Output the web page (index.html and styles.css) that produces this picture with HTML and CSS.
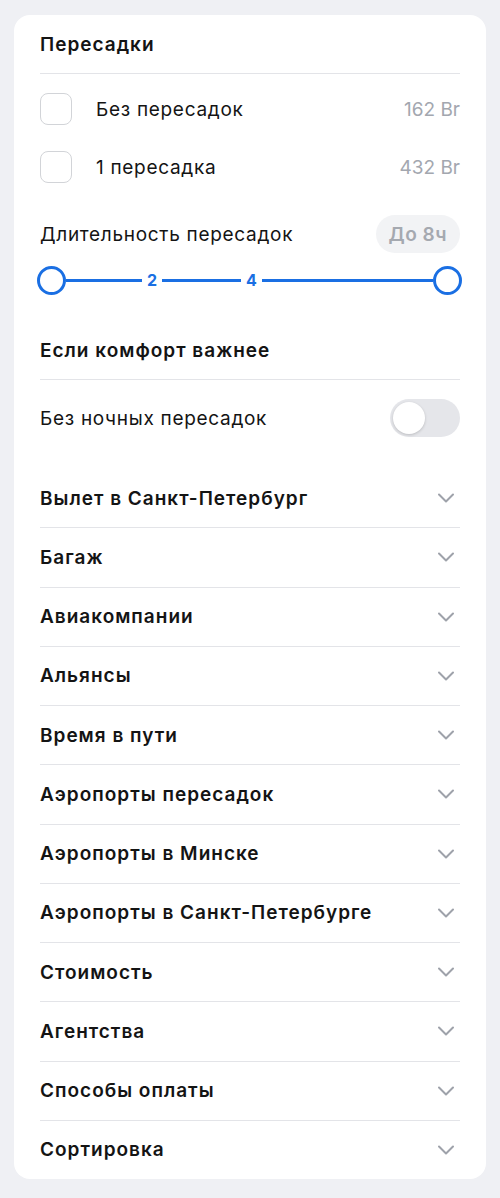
FILE: index.html
```html
<!DOCTYPE html>
<html lang="ru">
<head>
<meta charset="utf-8">
<link rel="stylesheet" href="styles.css">
</head>
<body>
<div class="card">
  <div class="section-title">Пересадки</div>
  <div class="divider"></div>
  <div class="check-row first">
    <span class="box"></span>
    <span class="check-label">Без пересадок</span>
    <span class="price">162 Br</span>
  </div>
  <div class="check-row">
    <span class="box"></span>
    <span class="check-label">1 пересадка</span>
    <span class="price">432 Br</span>
  </div>
  <div class="duration-row">
    <span class="duration-label">Длительность пересадок</span>
    <span class="pill">До 8ч</span>
  </div>
  <div class="slider">
    <span class="knob left"></span>
    <span class="track t1"></span>
    <span class="tick">2</span>
    <span class="track t2"></span>
    <span class="tick">4</span>
    <span class="track t3"></span>
    <span class="knob right"></span>
  </div>
  <div class="section-title comfort">Если комфорт важнее</div>
  <div class="divider"></div>
  <div class="toggle-row">
    <span class="toggle-label">Без ночных пересадок</span>
    <span class="toggle"><span class="toggle-knob"></span></span>
  </div>
  <div class="acc-list">
    <div class="acc-row"><span>Вылет в Санкт-Петербург</span><svg class="chev" viewBox="0 0 16 10" width="16" height="10"><polyline points="1,1.5 8,8.5 15,1.5"/></svg></div>
    <div class="acc-row"><span>Багаж</span><svg class="chev" viewBox="0 0 16 10" width="16" height="10"><polyline points="1,1.5 8,8.5 15,1.5"/></svg></div>
    <div class="acc-row"><span>Авиакомпании</span><svg class="chev" viewBox="0 0 16 10" width="16" height="10"><polyline points="1,1.5 8,8.5 15,1.5"/></svg></div>
    <div class="acc-row"><span>Альянсы</span><svg class="chev" viewBox="0 0 16 10" width="16" height="10"><polyline points="1,1.5 8,8.5 15,1.5"/></svg></div>
    <div class="acc-row"><span>Время в пути</span><svg class="chev" viewBox="0 0 16 10" width="16" height="10"><polyline points="1,1.5 8,8.5 15,1.5"/></svg></div>
    <div class="acc-row"><span>Аэропорты пересадок</span><svg class="chev" viewBox="0 0 16 10" width="16" height="10"><polyline points="1,1.5 8,8.5 15,1.5"/></svg></div>
    <div class="acc-row"><span>Аэропорты в Минске</span><svg class="chev" viewBox="0 0 16 10" width="16" height="10"><polyline points="1,1.5 8,8.5 15,1.5"/></svg></div>
    <div class="acc-row"><span>Аэропорты в Санкт-Петербурге</span><svg class="chev" viewBox="0 0 16 10" width="16" height="10"><polyline points="1,1.5 8,8.5 15,1.5"/></svg></div>
    <div class="acc-row"><span>Стоимость</span><svg class="chev" viewBox="0 0 16 10" width="16" height="10"><polyline points="1,1.5 8,8.5 15,1.5"/></svg></div>
    <div class="acc-row"><span>Агентства</span><svg class="chev" viewBox="0 0 16 10" width="16" height="10"><polyline points="1,1.5 8,8.5 15,1.5"/></svg></div>
    <div class="acc-row"><span>Способы оплаты</span><svg class="chev" viewBox="0 0 16 10" width="16" height="10"><polyline points="1,1.5 8,8.5 15,1.5"/></svg></div>
    <div class="acc-row"><span>Сортировка</span><svg class="chev" viewBox="0 0 16 10" width="16" height="10"><polyline points="1,1.5 8,8.5 15,1.5"/></svg></div>
  </div>
</div>
</body>
</html>
```

FILE: styles.css
```css
html, body {
  margin: 0;
  padding: 0;
  background: #eff0f4;
}
body {
  font-family: Inter, "Noto Sans", sans-serif;
  color: #141414;
  padding: 15px 14px 19px 14px;
}
.card {
  background: #ffffff;
  border-radius: 16px;
  padding: 18px 26px 0 26px;
}
.section-title {
  font-size: 19px;
  font-weight: 600;
  line-height: 24px;
  margin-bottom: 16px;
  letter-spacing: 1px;
}
.section-title.comfort {
  margin-top: 44px;
}
.divider {
  height: 1px;
  background: #e3e4e8;
}
.check-row {
  display: flex;
  align-items: center;
  height: 58px;
}
.check-row.first {
  margin-top: 6px;
}
.box {
  width: 30px;
  height: 30px;
  border: 1px solid #d2d4d8;
  border-radius: 8px;
  flex: none;
}
.check-label {
  font-size: 19px;
  margin-left: 24px;
  flex: 1;
  letter-spacing: 0.7px;
}
.price {
  font-size: 19px;
  color: #a3a7af;
  letter-spacing: 0;
}
.duration-row {
  margin-top: 19px;
  height: 38px;
  display: flex;
  align-items: center;
  justify-content: space-between;
}
.duration-label {
  font-size: 19px;
  letter-spacing: 0.7px;
}
.pill {
  background: #f2f3f5;
  border-radius: 19px;
  height: 38px;
  padding: 0 13px;
  display: flex;
  align-items: center;
  font-size: 19px;
  font-weight: 600;
  color: #a5a9b0;
  letter-spacing: 0.5px;
}
.slider {
  margin-top: 12px;
  height: 30px;
  display: flex;
  align-items: center;
}
.knob {
  width: 23px;
  height: 23px;
  border: 3px solid #1a6fe3;
  border-radius: 50%;
  background: #fff;
  flex: none;
}
.knob.left { margin-left: -3px; }
.knob.right { margin-right: -2px; }
.track {
  height: 3px;
  background: #1a6fe3;
}
.t1 { width: 76px; }
.t2 { width: 79px; }
.t3 { flex: 1; }
.tick {
  font-size: 16px;
  font-weight: 700;
  color: #1a6fe3;
  padding: 0 5px;
  line-height: 18px;
}
.toggle-row {
  margin-top: 19px;
  height: 38px;
  display: flex;
  align-items: center;
  justify-content: space-between;
}
.toggle-label {
  font-size: 19px;
  letter-spacing: 0.7px;
}
.toggle {
  width: 70px;
  height: 38px;
  border-radius: 19px;
  background: #e5e6ea;
  display: flex;
  align-items: center;
  padding-left: 3px;
  box-sizing: border-box;
}
.toggle-knob {
  width: 32px;
  height: 32px;
  border-radius: 50%;
  background: #fff;
  box-shadow: 0 1px 3px rgba(0,0,0,0.18);
}
.acc-list {
  margin-top: 32px;
}
.acc-row {
  height: 58.25px;
  display: flex;
  align-items: center;
  justify-content: space-between;
  border-bottom: 1px solid #e3e4e8;
  font-size: 19px;
  font-weight: 600;
  letter-spacing: 1px;
}
.acc-row:last-child {
  border-bottom: none;
}
.chev {
  margin-right: 6px;
  fill: none;
  stroke: #9ea2aa;
  stroke-width: 2;
  stroke-linecap: round;
  stroke-linejoin: round;
}
```
